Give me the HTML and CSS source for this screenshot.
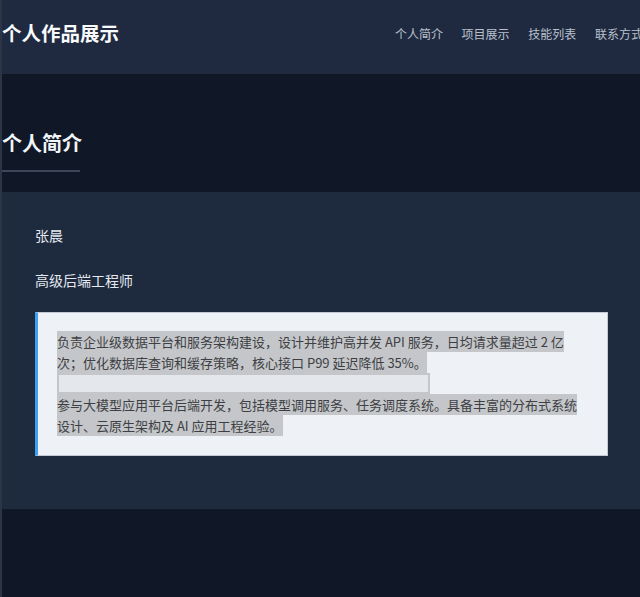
FILE: index.html
```html
<!DOCTYPE html>
<html lang="zh-CN">
<head>
    <meta charset="UTF-8">
    <meta name="viewport" content="width=device-width, initial-scale=1.0">
    <title>个人作品展示</title>
    <link rel="stylesheet" href="styles.css">
</head>
<body>
    <div class="page">
        <header class="topbar">
            <h1 class="brand">个人作品展示</h1>
            <nav class="nav">
                <a href="#about">个人简介</a>
                <a href="#projects">项目展示</a>
                <a href="#skills">技能列表</a>
                <a href="#contact">联系方式</a>
            </nav>
        </header>

        <div class="heading-wrap">
            <h2 class="heading">个人简介</h2>
        </div>

        <section class="about" id="about">
            <p class="name">张晨</p>
            <p class="role">高级后端工程师</p>
            <div class="intro">
                <p><span class="sel">负责企业级数据平台和服务架构建设，设计并维护高并发 API 服务，日均请求量超过 2 亿次；优化数据库查询和缓存策略，核心接口 P99 延迟降低 35%。</span></p>
                <div class="sel-gap"></div>
                <p><span class="sel">参与大模型应用平台后端开发，包括模型调用服务、任务调度系统。具备丰富的分布式系统设计、云原生架构及 AI 应用工程经验。</span></p>
            </div>
        </section>
    </div>
</body>
</html>
```

FILE: styles.css
```css
*{
    margin: 0;
    padding: 0;
    box-sizing: border-box;
}

html, body{
    overflow: hidden;
}

body{
    font-family: "Noto Sans CJK SC", "Noto Sans", sans-serif;
    background-color: #101827;
    border-left: 2px solid #2c3546;
    min-height: 100vh;
}

.page{
    width: 641px;
}

.topbar{
    height: 74px;
    background-color: #1f2a40;
    display: flex;
    align-items: center;
    justify-content: space-between;
    padding-bottom: 8px;
}

.brand{
    font-size: 19.5px;
    font-weight: 700;
    color: #f8fafc;
    line-height: 1.5;
    white-space: nowrap;
}

.nav{
    display: flex;
    gap: 18.7px;
}

.nav a{
    font-size: 12px;
    color: #b9c1cd;
    text-decoration: none;
    white-space: nowrap;
}

.heading-wrap{
    padding: 54px 0 20px;
}

.heading{
    display: inline-block;
    font-size: 20px;
    font-weight: 700;
    line-height: 30px;
    color: #f1f5f9;
    padding-bottom: 12px;
    border-bottom: 2px solid #3d4656;
    width: 78px;
    white-space: nowrap;
}

.about{
    background-color: #1e2a3e;
    padding: 33px 33px 53px;
    width: 638px;
}

.name, .role{
    font-size: 14px;
    line-height: 21px;
    color: #e5e9ef;
}

.name{
    margin-bottom: 24px;
}

.role{
    margin-bottom: 21px;
}

.intro{
    width: 573px;
    background-color: #eef2f7;
    border: 1px solid #c3c9d2;
    border-left: 3px solid #3d9ff0;
    padding: 18px 24px 19px 19px;
}

.intro p{
    font-size: 13px;
    line-height: 21px;
    color: #3d3f44;
}

.sel{
    background-color: #c4c6c9;
    padding: 1.1px 0;
}

.sel-gap{
    height: 21px;
    width: 373px;
    background-color: #e4e7eb;
    border: 2px solid #c4c6c9;
}
```
